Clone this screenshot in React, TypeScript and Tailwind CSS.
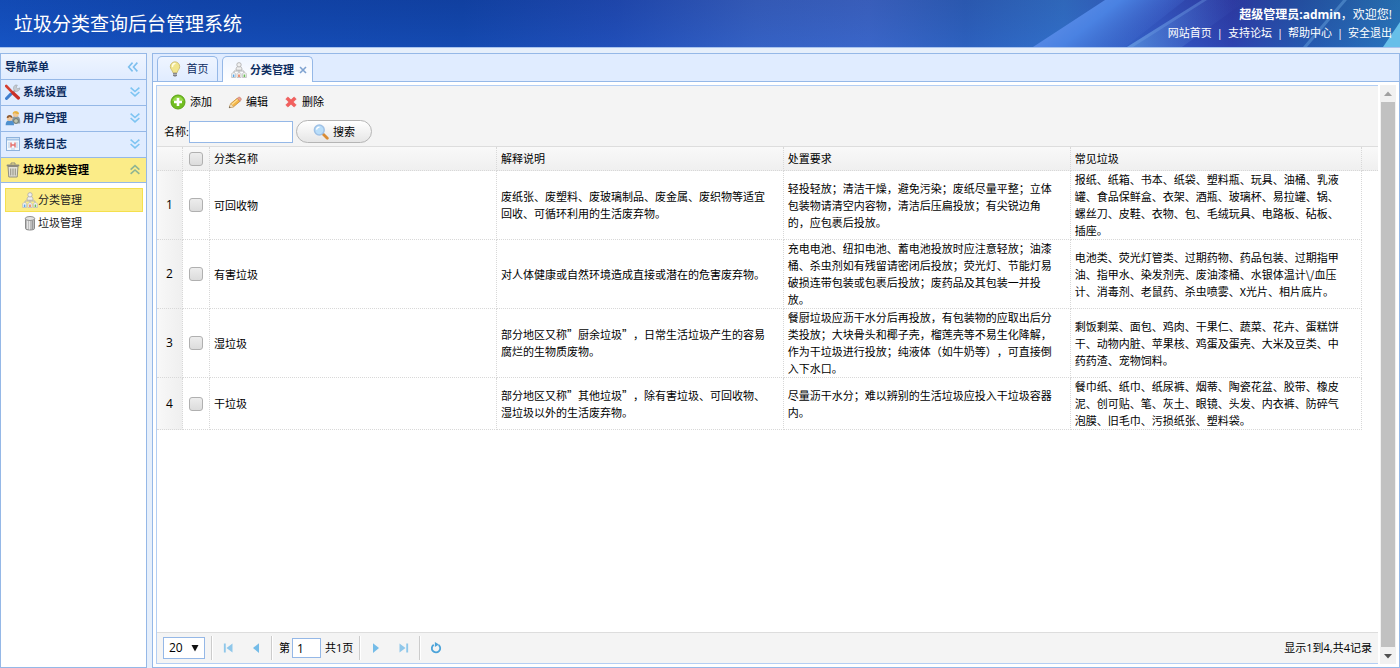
import { useState, type ReactNode } from "react"

type IconName =
  | "tools"
  | "users"
  | "log"
  | "trash"
  | "org"
  | "bin"
  | "bulb"
  | "add"
  | "pencil"
  | "cross"
  | "search"
  | "first"
  | "prev"
  | "next"
  | "last"
  | "refresh"
  | "chevronLeft"
  | "chevronDown"
  | "chevronUp"

type Category = {
  name: string
  description: string
  requirement: string
  examples: string
}

const categories: Category[] = [
  {
    name: "可回收物",
    description: "废纸张、废塑料、废玻璃制品、废金属、废织物等适宜回收、可循环利用的生活废弃物。",
    requirement:
      "轻投轻放；清洁干燥，避免污染；废纸尽量平整；立体包装物请清空内容物，清洁后压扁投放；有尖锐边角的，应包裹后投放。",
    examples:
      "报纸、纸箱、书本、纸袋、塑料瓶、玩具、油桶、乳液罐、食品保鲜盒、衣架、酒瓶、玻璃杯、易拉罐、锅、螺丝刀、皮鞋、衣物、包、毛绒玩具、电路板、砧板、插座。",
  },
  {
    name: "有害垃圾",
    description: "对人体健康或自然环境造成直接或潜在的危害废弃物。",
    requirement:
      "充电电池、纽扣电池、蓄电池投放时应注意轻放；油漆桶、杀虫剂如有残留请密闭后投放；荧光灯、节能灯易破损连带包装或包裹后投放；废药品及其包装一并投放。",
    examples:
      "电池类、荧光灯管类、过期药物、药品包装、过期指甲油、指甲水、染发剂壳、废油漆桶、水银体温计\\/血压计、消毒剂、老鼠药、杀虫喷雾、X光片、相片底片。",
  },
  {
    name: "湿垃圾",
    description: "部分地区又称”厨余垃圾”，日常生活垃圾产生的容易腐烂的生物质废物。",
    requirement:
      "餐厨垃圾应沥干水分后再投放，有包装物的应取出后分类投放；大块骨头和椰子壳，榴莲壳等不易生化降解，作为干垃圾进行投放；纯液体（如牛奶等），可直接倒入下水口。",
    examples:
      "剩饭剩菜、面包、鸡肉、干果仁、蔬菜、花卉、蛋糕饼干、动物内脏、苹果核、鸡蛋及蛋壳、大米及豆类、中药药渣、宠物饲料。",
  },
  {
    name: "干垃圾",
    description: "部分地区又称”其他垃圾”，除有害垃圾、可回收物、湿垃圾以外的生活废弃物。",
    requirement: "尽量沥干水分；难以辨别的生活垃圾应投入干垃圾容器内。",
    examples:
      "餐巾纸、纸巾、纸尿裤、烟蒂、陶瓷花盆、胶带、橡皮泥、创可贴、笔、灰土、眼镜、头发、内衣裤、防碎气泡膜、旧毛巾、污损纸张、塑料袋。",
  },
]

const menus: { icon: IconName; label: string }[] = [
  { icon: "tools", label: "系统设置" },
  { icon: "users", label: "用户管理" },
  { icon: "log", label: "系统日志" },
]

const headerLinks = ["网站首页", "支持论坛", "帮助中心", "安全退出"]

const shapes: Record<IconName, ReactNode> = {
  tools: (
    <>
      <path d="M2.5 14 11 5.5" stroke="#a9b0b8" strokeWidth="2.4" strokeLinecap="round" />
      <path d="M10 1.2a3.6 3.6 0 0 1 2.4 0l-1.2 2 1.4 1.6 2.3-.9a3.4 3.4 0 0 1-4.8 3.2A3.6 3.6 0 0 1 10 1.2Z" fill="#c6cbd1" stroke="#8e959d" strokeWidth=".5" />
      <path d="M1.5 14.5 5.8 10" stroke="#3f7fd0" strokeWidth="3" strokeLinecap="round" />
      <path d="m1.2 2 6.4 6.6" stroke="#d43d30" strokeWidth="2.6" strokeLinecap="round" />
      <path d="m8 9 5.4 5" stroke="#c92f27" strokeWidth="3.2" strokeLinecap="round" />
    </>
  ),
  users: (
    <>
      <path d="M7 11.5c0-4 1-5.5 3.8-5.5s4.4 1.6 4.4 5.5v2H7Z" fill="#8b9aa3" />
      <circle cx="10.8" cy="4" r="3" fill="#f2c893" />
      <path d="M7.6 3.8C7.4.4 14 .2 14 4c-2 0-4-.6-4.2-1.6-.4 1-1.2 1.4-2.2 1.4Z" fill="#e6b23f" />
      <circle cx="11" cy="11" r="2.4" fill="#c1c7b2" stroke="#6e776f" />
      <path d="M.6 15.2c0-3.6 1.4-5 4-5s4.4 1.4 4.4 5Z" fill="#4f91cf" />
      <circle cx="4.6" cy="8.2" r="2.7" fill="#f3c79a" />
      <path d="M1.7 8c-.2-4 6-4 5.9 0C6 7.8 5 7.2 4.8 6.5 4.2 7.5 3 8 1.7 8Z" fill="#8c5a34" />
    </>
  ),
  log: (
    <>
      <rect x="1.5" y="1.5" width="13" height="13" fill="#f2f7fc" stroke="#8eb2dc" />
      <path d="M2 3.5h12" stroke="#a9c8ea" strokeWidth="2" />
      <path d="M3 7h2M3 9h2M3 11h2M11 7h2M11 9h2M11 11h2M6 13h4" stroke="#b7cde6" />
      <path d="M6 6.5v5M10 6.5v5M6 9h4" stroke="#e5706c" strokeWidth="1.4" />
    </>
  ),
  trash: (
    <>
      <path d="M3 4.5h10l-.8 10.500H3.800Z" fill="#e2e1d8" stroke="#918f80" />
      <path d="M5.7 6.5v7M8 6.5v7M10.3 6.5v7" stroke="#9b998c" strokeWidth="1.2" />
      <path d="M2.5 3.5h11" stroke="#8b897c" strokeWidth="1.8" strokeLinecap="round" />
      <path d="M6 2.5V1h4v1.5" stroke="#8b897c" fill="none" />
    </>
  ),
  org: (
    <>
      <path d="M8 6v3M3 11V9h10v2M8 9v2" stroke="#b5b5b5" fill="none" />
      <path d="M5 8.2c0-3 1-3.7 3-3.700s3 .7 3 3.700Z" fill="#f0f0f0" stroke="#aaa" strokeWidth=".8" />
      <circle cx="8" cy="2.8" r="2.200" fill="#f0f0f0" stroke="#aaa" strokeWidth=".8" />
      <path d="M.6 15.5v-3.300c0-2 4-2 4 0v3.300ZM6 15.5v-3.300c0-2 4-2 4 0v3.300ZM11.4 15.5v-3.300c0-2 4-2 4 0v3.300Z" fill="#f8f8f8" stroke="#bbb" strokeWidth=".8" />
      <path d="M2.6 12.5V15" stroke="#58a7e8" strokeWidth="1.6" />
      <path d="M8 12.5V15" stroke="#ec7a56" strokeWidth="1.6" />
      <path d="M13.4 12.5V15" stroke="#69bd55" strokeWidth="1.6" />
    </>
  ),
  bin: (
    <>
      <path d="M3.5 3.5v10c0 2 9 2 9 0v-10Z" fill="#bdbdbd" stroke="#8a8a8a" />
      <path d="M5.5 5v9M7.5 5v9.5" stroke="#e5e5e5" />
      <path d="M10.5 5v9" stroke="#9a9a9a" />
      <ellipse cx="8" cy="3.5" rx="4.7" ry="2" fill="#e3e3e3" stroke="#909090" />
    </>
  ),
  bulb: (
    <>
      <path d="M8 .8a4.8 4.8 0 0 0-4.7 4.9c0 2.5 2.2 3.6 2.5 5.8h4.4c.3-2.2 2.5-3.3 2.5-5.8A4.8 4.8 0 0 0 8 .8Z" fill="#f1e58c" stroke="#c4b56b" strokeWidth=".8" />
      <path d="M5.5 5.5C5.5 3.5 6.5 2.5 8 2.4" stroke="#fffde0" strokeWidth="1.5" fill="none" strokeLinecap="round" />
      <path d="M6 12h4v2.2L9 15.5H7l-1-1.300Z" fill="#7c7f86" />
      <path d="M6 13.3h4" stroke="#d5d7da" strokeWidth=".7" />
    </>
  ),
  add: (
    <>
      <circle cx="8" cy="8" r="7" fill="#71bd20" stroke="#5ca516" />
      <path d="M2.5 7a5.6 5.6 0 0 1 11 0Z" fill="#97d94a" />
      <path d="M8 4v8M4 8h8" stroke="#fff" strokeWidth="2.6" />
    </>
  ),
  pencil: (
    <>
      <path d="M1.5 14.5 3 10l7.5-6.2 3.2 3.4L6.3 13.5Z" fill="#f5b748" stroke="#bb7d27" strokeWidth=".8" />
      <path d="m4.2 10.8 7-5.8" stroke="#fde09a" strokeWidth="1.4" />
      <path d="m10.5 3.8 1.7-1.3c1.4-.6 3.5 1.5 2.9 3l-1.4 1.700Z" fill="#eda08f" stroke="#bd7463" strokeWidth=".6" />
      <path d="M1.5 14.5 3 10l3.3 3.5Z" fill="#f8e6c5" stroke="#b99a6a" strokeWidth=".5" />
      <path d="m1.2 14.8.5-1.900 1.400 1.300Z" fill="#555" />
    </>
  ),
  cross: <path d="m2 4.5 2.5-2.3L8 5.5l3.5-3.3L14 4.5 10.6 8l3.4 3.5-2.5 2.3L8 10.5l-3.5 3.3L2 11.5 5.4 8Z" fill="#f2605e" stroke="#e8504f" strokeWidth=".6" />,
  search: (
    <>
      <path d="m10 10 4.3 4.3" stroke="#d98c35" strokeWidth="2.8" strokeLinecap="round" />
      <circle cx="6.3" cy="6" r="4.9" fill="#b9defa" stroke="#9fc1e6" strokeWidth="1.5" />
      <path d="M3.5 5.7c.3-1.7 1.5-2.5 3-2.5" stroke="#fff" strokeWidth="1.3" fill="none" />
    </>
  ),
  first: <path d="M2.5 2H5v12H2.5ZM14 2v12L6 8Z" fill="#8fc7ea" />,
  prev: <path d="M12 1.5v13L4 8Z" fill="#74bce8" />,
  next: <path d="M4 1.5v13L12 8Z" fill="#74bce8" />,
  last: <path d="M11 2h2.5v12H11ZM2 2v12l8-6Z" fill="#8fc7ea" />,
  refresh: (
    <>
      <path d="M5 3.6a5.6 5.6 0 1 0 6.5.3" stroke="#4ba3d9" strokeWidth="2.4" fill="none" />
      <path d="M6.5 0v6.5L12 3.2Z" fill="#4ba3d9" />
    </>
  ),
  chevronLeft: <path d="M7.5 3 3 8l4.5 5M13 3 8.5 8l4.5 5" stroke="#7dbfee" strokeWidth="1.8" fill="none" />,
  chevronDown: <path d="m3 3 5 4.5L13 3M3 8l5 4.5L13 8" stroke="#7dc4f2" strokeWidth="1.8" fill="none" />,
  chevronUp: <path d="m3 7.5 5-4.5 5 4.5M3 12.5 8 8l5 4.5" stroke="#8fb493" strokeWidth="1.8" fill="none" />,
}

function Icon({ name, className = "size-4" }: { name: IconName; className?: string }) {
  return (
    <svg viewBox="0 0 16 16" fill="none" aria-hidden="true" className={`${className} shrink-0`}>
      {shapes[name]}
    </svg>
  )
}

function HeaderArt() {
  return (
    <svg viewBox="0 0 1400 47" preserveAspectRatio="none" aria-hidden="true" className="absolute inset-0 size-full">
      <defs>
        <linearGradient id="base" x1="0" x2="1" y1="0" y2="0">
          <stop offset="0" stopColor="#1450bd" />
          <stop offset=".14" stopColor="#1247ad" />
          <stop offset=".33" stopColor="#1243a4" />
          <stop offset=".44" stopColor="#234ab0" />
          <stop offset=".54" stopColor="#3d62be" />
          <stop offset=".62" stopColor="#4468c4" />
          <stop offset=".69" stopColor="#3261b6" />
          <stop offset=".76" stopColor="#3874c4" />
          <stop offset=".83" stopColor="#3b55bd" />
          <stop offset=".88" stopColor="#3439a2" />
          <stop offset=".93" stopColor="#2955a2" />
          <stop offset="1" stopColor="#2c7bb4" />
        </linearGradient>
        <linearGradient id="beam" x1="0" x2="1" y1="0" y2=".4">
          <stop offset="0" stopColor="#6c95ea" />
          <stop offset=".5" stopColor="#4a82e2" />
          <stop offset="1" stopColor="#4060c8" stopOpacity="0" />
        </linearGradient>
        <linearGradient id="sheen" x1="0" x2="1" y1="0" y2="0">
          <stop offset="0" stopColor="#5b96de" />
          <stop offset="1" stopColor="#3d55bd" stopOpacity="0" />
        </linearGradient>
        <linearGradient id="glow" x1="0" x2="0" y1="0" y2="1">
          <stop offset="0" stopColor="#0b3390" stopOpacity=".2" />
          <stop offset="1" stopColor="#1c60d8" stopOpacity=".25" />
        </linearGradient>
      </defs>
      <path d="M0 0h1400v47H0Z" fill="url(#base)" />
      <path d="M0 0h1400v47H0Z" fill="url(#glow)" />
      <path d="M1033 47 1105 0h80l-60 47Z" fill="url(#beam)" />
      <path d="M1127 47 1202 0h45l-65 47Z" fill="url(#sheen)" opacity=".75" />
      <path d="m1127 47 75-47h5l-74 47Z" fill="#7ca9ea" opacity=".3" />
      <path d="m1303 47 40-47h4l-40 47Z" fill="#64a0dc" opacity=".5" />
      <path d="M1383 47 1400 22v25Z" fill="#67bfe9" />
    </svg>
  )
}

function Header() {
  return (
    <header className="relative flex h-12 shrink-0 items-center justify-between border-b border-[#a9c4ee] bg-[#1247ad] pr-2 pl-3.5 text-white">
      <HeaderArt />
      <h1 className="relative text-[19px] leading-6">垃圾分类查询后台管理系统</h1>
      <div className="relative flex flex-col items-end leading-[18px]">
        <p className="text-xs leading-[18px]">
          <strong>超级管理员:admin</strong>，欢迎您!
        </p>
        <nav className="flex gap-[5px]">
          {headerLinks.map((link, i) => (
            <span key={link} className="flex gap-[5px]">
              {i > 0 && <span>|</span>}
              <a href="#">{link}</a>
            </span>
          ))}
        </nav>
      </div>
    </header>
  )
}

function Sidebar() {
  return (
    <aside className="flex w-[147px] shrink-0 flex-col border border-[#95b8e7] bg-white text-[#0e2d5f]">
      <div className="flex h-[26px] shrink-0 items-center justify-between border-b border-[#95b8e7] bg-gradient-to-b from-[#eff5ff] to-[#e0ecff] pr-1.5 pl-1">
        <h2 className="font-bold">导航菜单</h2>
        <button type="button" aria-label="折叠">
          <Icon name="chevronLeft" className="size-3.5" />
        </button>
      </div>
      {menus.map((menu) => (
        <button
          key={menu.label}
          type="button"
          className="flex h-[26px] shrink-0 items-center gap-0.5 border-b border-[#95b8e7] bg-[#e0ecff] pr-1 pb-px pl-1 text-left font-bold"
        >
          <Icon name={menu.icon} />
          <span className="flex-1">{menu.label}</span>
          <Icon name="chevronDown" className="size-3.5" />
        </button>
      ))}
      <button
        type="button"
        className="flex h-[25px] shrink-0 items-center gap-0.5 border-b border-[#95b8e7] bg-[#fbec88] pr-1 pb-px pl-1 text-left font-bold text-black"
      >
        <Icon name="trash" />
        <span className="flex-1">垃圾分类管理</span>
        <Icon name="chevronUp" className="size-3.5" />
      </button>
      <nav className="py-[5px] pr-[3px] pl-1 text-[#222]">
        <a href="#" className="flex h-6 items-center border border-[#f5e04d] bg-[#fbec88] pl-4">
          <Icon name="org" />
          分类管理
        </a>
        <a href="#" className="flex h-[22px] items-center pl-[17px]">
          <Icon name="bin" />
          垃圾管理
        </a>
      </nav>
    </aside>
  )
}

function Tabs() {
  return (
    <div className="flex h-7 shrink-0 items-end gap-1 border-b border-[#95b8e7] bg-[#e0ecff] px-1 text-[#0e2d5f]">
      <button
        type="button"
        className="flex h-[25px] w-[61px] items-center justify-center gap-1 rounded-t-[5px] border border-b-0 border-[#95b8e7] bg-gradient-to-b from-[#eff5ff] to-[#e0ecff]"
      >
        <Icon name="bulb" />
        <span>首页</span>
      </button>
      <div className="-mb-px flex h-[26px] items-center rounded-t-[5px] border border-b-0 border-[#95b8e7] bg-gradient-to-b from-[#eff5ff] to-white pr-[3px] pl-2">
        <button type="button" className="flex items-center gap-[3px] font-bold">
          <Icon name="org" />
          分类管理
        </button>
        <button type="button" aria-label="关闭" className="ml-[3px] p-0.5">
          <svg viewBox="0 0 8 8" aria-hidden="true" className="size-2">
            <path d="m1 1 6 6m0-6L1 7" stroke="#7fa3d0" strokeWidth="1.6" />
          </svg>
        </button>
      </div>
    </div>
  )
}

function Toolbar() {
  const [keyword, setKeyword] = useState("")

  return (
    <div className="flex h-[61px] shrink-0 flex-col justify-between border-b border-[#ddd] bg-[#f4f4f4] px-[7px] pt-2 pb-[3px]">
      <div className="flex gap-4 pl-1.5">
        <button type="button" className="flex items-center gap-1">
          <Icon name="add" />
          添加
        </button>
        <button type="button" className="flex items-center gap-1">
          <Icon name="pencil" className="size-3.5" />
          编辑
        </button>
        <button type="button" className="flex items-center gap-1">
          <Icon name="cross" className="size-3.5" />
          删除
        </button>
      </div>
      <form className="flex items-center" onSubmit={(e) => e.preventDefault()}>
        <label htmlFor="name">名称:</label>
        <input
          id="name"
          value={keyword}
          onChange={(e) => setKeyword(e.target.value)}
          className="h-[22px] w-[104px] border border-[#95b8e7] bg-white px-1 outline-none"
        />
        <button
          type="submit"
          className="ml-[3px] flex h-[23px] w-[76px] items-center justify-center gap-1 rounded-full border border-[#b5b5b5] bg-gradient-to-b from-white to-[#e6e6e6]"
        >
          <Icon name="search" />
          搜索
        </button>
      </form>
    </div>
  )
}

const checkboxClass =
  "block size-3.5 appearance-none rounded-[3px] border border-[#b0b0b0] bg-gradient-to-b from-[#ededed] to-[#dcdcdc] checked:bg-blue-400"

function DataGrid() {
  const headCell = "border-r border-b border-dotted border-[#d8d8d8] pl-1 text-left font-normal"
  const bodyCell = "border-r border-b border-dotted border-[#d8d8d8] pr-4 pl-1"

  return (
    <div className="min-h-0 flex-1 overflow-auto bg-white">
      <table className="w-full table-fixed border-separate border-spacing-0 font-['Noto_Sans_CJK_SC',sans-serif] leading-[17px] [text-spacing-trim:space-all]">
        <colgroup>
          <col className="w-[26px]" />
          <col className="w-[27px]" />
          <col className="w-[23.5%]" />
          <col className="w-[23.5%]" />
          <col className="w-[23.5%]" />
          <col />
          <col className="w-4" />
        </colgroup>
        <thead className="bg-gradient-to-b from-[#f9f9f9] to-[#efefef]">
          <tr className="h-6">
            <th className={headCell}></th>
            <th className="border-r border-b border-dotted border-[#d8d8d8] p-0">
              <input type="checkbox" aria-label="全选" className={checkboxClass + " mx-auto"} />
            </th>
            <th className={headCell}>分类名称</th>
            <th className={headCell}>解释说明</th>
            <th className={headCell}>处置要求</th>
            <th className={headCell}>常见垃圾</th>
            <th className="border-b border-dotted border-[#d8d8d8]"></th>
          </tr>
        </thead>
        <tbody>
          {categories.map((row, i) => (
            <tr key={row.name}>
              <td className="border-r border-b border-dotted border-[#d8d8d8] bg-gradient-to-r from-[#f8f8f8] to-[#efefef] text-center font-['Open_Sans',sans-serif] text-xs">
                {i + 1}
              </td>
              <td className="border-r border-b border-dotted border-[#d8d8d8]">
                <input type="checkbox" aria-label={row.name} className={checkboxClass + " mx-auto"} />
              </td>
              <td className={bodyCell}>{row.name}</td>
              <td className={bodyCell}>{row.description}</td>
              <td className={bodyCell}>{row.requirement}</td>
              <td className={bodyCell}>{row.examples}</td>
              <td></td>
            </tr>
          ))}
        </tbody>
      </table>
    </div>
  )
}

function Divider() {
  return <span className="h-6 border-r border-l border-r-white border-l-[#ccc]" />
}

function Pager() {
  const [page, setPage] = useState("1")

  return (
    <div className="flex h-[31px] shrink-0 items-center justify-between border-t border-[#ddd] bg-[#f4f4f4] px-1.5">
      <div className="flex items-center gap-1.5">
        <div className="relative">
          <select
            aria-label="每页条数"
            className="block h-[22px] w-[42px] appearance-none border border-[#95b8e7] bg-white pl-[5px] text-xs"
          >
            <option>20</option>
            <option>30</option>
            <option>50</option>
          </select>
          <svg viewBox="0 0 8 8" aria-hidden="true" className="pointer-events-none absolute top-[7px] right-1.5 size-2">
            <path d="M.5 1h7L4 7.5Z" fill="#111" />
          </svg>
        </div>
        <Divider />
        <div className="flex gap-4 px-[3px]">
          <button type="button" aria-label="首页">
            <Icon name="first" className="size-3" />
          </button>
          <button type="button" aria-label="上一页">
            <Icon name="prev" className="size-3" />
          </button>
        </div>
        <Divider />
        <div className="flex items-center">
          <label htmlFor="page">第</label>
          <input
            id="page"
            value={page}
            onChange={(e) => setPage(e.target.value)}
            className="mr-1 ml-0.5 h-5 w-[29px] border border-[#95b8e7] bg-white px-1 text-xs outline-none"
          />
          <span>共1页</span>
        </div>
        <Divider />
        <div className="flex gap-4 px-[3px]">
          <button type="button" aria-label="下一页">
            <Icon name="next" className="size-3" />
          </button>
          <button type="button" aria-label="末页">
            <Icon name="last" className="size-3" />
          </button>
        </div>
        <Divider />
        <button type="button" aria-label="刷新" className="px-[3px]">
          <Icon name="refresh" className="size-3" />
        </button>
      </div>
      <span>显示1到4,共4记录</span>
    </div>
  )
}

function ScrollTrack() {
  return (
    <div aria-hidden="true" className="flex w-4 shrink-0 flex-col items-center bg-[#f1f1f1]">
      <svg viewBox="0 0 16 17" className="h-[17px] w-4">
        <path d="m4 11 4-4.5 4 4.5Z" fill="#a0a0a0" />
      </svg>
      <div className="w-3.5 flex-1 bg-[#c1c1c1]" />
      <svg viewBox="0 0 16 17" className="h-[17px] w-4">
        <path d="m4 7 4 4.5L12 7Z" fill="#505050" />
      </svg>
    </div>
  )
}

function App() {
  return (
    <div
      lang="zh-CN"
      className="flex h-screen flex-col bg-[#e6effb] font-['Open_Sans','Noto_Sans_CJK_SC',sans-serif] text-[11px] leading-4 text-black"
    >
      <Header />
      <div className="flex min-h-0 flex-1 gap-[5px] pt-[5px]">
        <Sidebar />
        <main className="flex min-w-0 flex-1 flex-col border border-[#95b8e7] bg-white">
          <Tabs />
          <div className="flex min-h-0 flex-1 gap-0.5 p-[3px]">
            <section className="flex min-w-0 flex-1 flex-col border border-r-0 border-[#b3cef3]">
              <Toolbar />
              <DataGrid />
              <Pager />
            </section>
            <ScrollTrack />
          </div>
        </main>
      </div>
    </div>
  )
}

export default App
